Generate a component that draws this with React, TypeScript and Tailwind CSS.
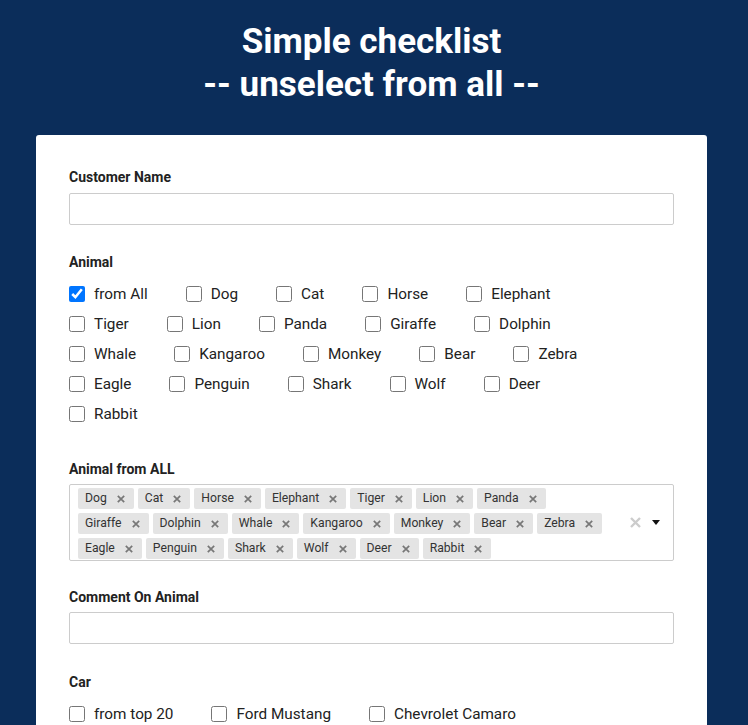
import { useState } from "react";

const animals = [
  "Dog", "Cat", "Horse", "Elephant", "Tiger", "Lion", "Panda", "Giraffe", "Dolphin", "Whale",
  "Kangaroo", "Monkey", "Bear", "Zebra", "Eagle", "Penguin", "Shark", "Wolf", "Deer", "Rabbit",
];

const cars = ["from top 20", "Ford Mustang", "Chevrolet Camaro"];

function Check({ label, checked }: { label: string; checked?: boolean }) {
  return (
    <label className="flex items-center h-[30px] mr-[38px] cursor-pointer">
      <input type="checkbox" defaultChecked={checked} className="w-4 h-4 m-0 accent-[#0075ff]" />
      <span className="ml-[9px] text-[15.3px] text-[#222]">{label}</span>
    </label>
  );
}

function Label({ children, className = "mb-[6px]" }: { children: React.ReactNode; className?: string }) {
  return <div className={`text-[14px] leading-5 font-bold text-[#222] ${className}`}>{children}</div>;
}

export default function App() {
  const [tags, setTags] = useState(animals);

  return (
    <div className="min-h-[725px] bg-[#0b2d5a] font-['Roboto',sans-serif] pt-5 pb-10 pr-[5px]">
      <h1 className="text-white text-[35px] leading-[43px] font-bold text-center">
        Simple checklist
        <br />
        -- unselect from all --
      </h1>

      <div className="mx-9 mt-[29px] bg-white rounded-[3px] px-[33px] pt-8 pb-8">
        <Label>Customer Name</Label>
        <input className="block w-full h-8 border border-[#ccc] rounded-[2px] px-2 text-sm outline-none" />

        <div className="mt-[27px]">
          <Label className="mb-[7px]">Animal</Label>
          <div className="flex flex-wrap pb-[3px]">
            <Check label="from All" checked />
            {animals.map((a) => (
              <Check key={a} label={a} />
            ))}
          </div>
        </div>

        <div className="mt-[27px]">
          <Label className="mb-[5px]">Animal from ALL</Label>
          <div className="flex items-center border border-[#ccc] rounded-[2px] min-h-[76px]">
            <div className="flex-1 flex flex-wrap gap-x-1 gap-y-[4px] pt-[3px] pb-[1px] pl-2 pr-2">
              {tags.map((t) => (
                <span
                  key={t}
                  className="flex items-center h-[21px] bg-[#e4e4e4] rounded-[2px] pl-[7px] pr-[9px] text-[12.2px] text-[#333]"
                >
                  {t}
                  <button
                    onClick={() => setTags(tags.filter((x) => x !== t))}
                    className="ml-[10px] w-2 h-2 flex items-center justify-center"
                  >
                    <svg width="8" height="8" viewBox="0 0 8 8">
                      <path d="M0.8 0.8L7.2 7.2M7.2 0.8L0.8 7.2" stroke="#777" strokeWidth="1.7" />
                    </svg>
                  </button>
                </span>
              ))}
            </div>
            <div className="flex items-center w-[50px] shrink-0 pl-[5px]">
              <button onClick={() => setTags([])} className="w-[14px] h-[14px] flex items-center justify-center">
                <svg width="11" height="11" viewBox="0 0 11 11">
                  <path d="M1 1L10 10M10 1L1 10" stroke="#ccc" strokeWidth="2.4" />
                </svg>
              </button>
              <svg width="8" height="5" viewBox="0 0 8 5" className="ml-[10px]">
                <path d="M0 0H8L4 5Z" fill="#111" />
              </svg>
            </div>
          </div>
        </div>

        <div className="mt-[26px]">
          <Label className="mb-[5px]">Comment On Animal</Label>
          <input className="block w-full h-8 border border-[#ccc] rounded-[2px] px-2 text-sm outline-none" />
        </div>

        <div className="mt-[28px]">
          <Label className="mb-[7px]">Car</Label>
          <div className="flex flex-wrap">
            {cars.map((c) => (
              <Check key={c} label={c} />
            ))}
          </div>
        </div>
      </div>
    </div>
  );
}
